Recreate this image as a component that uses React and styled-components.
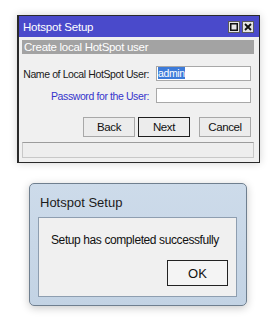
import React from 'react';
import styled, {createGlobalStyle} from 'styled-components';

const GlobalStyle = createGlobalStyle`
    body{
        margin: 0;
        background: #ffffff;
        font-family: "Liberation Sans", Arial, sans-serif;
    }
`;

const Page = styled('div')`
    width: 274px;
    height: 320px;
    display: flex;
    flex-direction: column;
    align-items: flex-start;
    overflow: hidden;
`;

const SetupWindow = styled('div')`
    margin: 15px 0 0 17px;
    width: 243px;
    height: 148px;
    box-sizing: border-box;
    border: 1px solid #2a2a2a;
    border-left-width: 2px;
    background: #f0f0f0;
    box-shadow: 0 0 8px rgba(0, 0, 0, 0.18);
    display: flex;
    flex-direction: column;
    font-size: 10.5px;
    letter-spacing: -0.4px;
    white-space: nowrap;
`;

const TitleBar = styled('div')`
    height: 21px;
    background: #4a4acb;
    display: flex;
    align-items: center;
    justify-content: space-between;
    padding: 0 5px 0 4px;
    color: #ffffff;
    font-size: 11.5px;
    letter-spacing: -0.2px;
`;

const TitleButtons = styled('div')`
    display: flex;
    gap: 2px;
`;

const TitleButton = styled('div')`
    width: 12px;
    height: 12px;
    box-sizing: border-box;
    background: #e4e4e4;
    border: 1px solid #5a5a5a;
    display: flex;
    align-items: center;
    justify-content: center;
`;

const Subtitle = styled('div')`
    margin: 3px 5px 0 3px;
    height: 14px;
    background: #a3a3a3;
    color: #ffffff;
    font-size: 11.5px;
    letter-spacing: -0.3px;
    line-height: 14px;
    padding-left: 2px;
`;

const Form = styled('div')`
    display: grid;
    grid-template-columns: minmax(0, 1fr) 95px;
    column-gap: 7px;
    row-gap: 7px;
    margin: 12px 8px 0 0;
    align-items: center;
`;

const Label = styled('div')`
    text-align: right;
    color: ${p => (p.$blue ? '#3535cc' : '#1a1a1a')};
`;

const Input = styled('div')`
    height: 15px;
    box-sizing: border-box;
    background: #ffffff;
    border: 1px solid #a8a8a8;
    line-height: 13px;
    padding-left: 1px;
`;

const Selected = styled('span')`
    background: #3d7bd9;
    color: #ffffff;
`;

const ButtonRow = styled('div')`
    display: flex;
    justify-content: flex-end;
    gap: 3px;
    margin: 14px 8px 0 0;
`;

const Button = styled('div')`
    width: 52px;
    height: 20px;
    box-sizing: border-box;
    border: 1px solid ${p => (p.$default ? '#1e1e1e' : '#a8a8a8')};
    background: #ececec;
    font-size: 11.5px;
    display: flex;
    align-items: center;
    justify-content: center;
    margin-left: ${p => p.$gap || 0}px;
    color: #111;
`;

const StatusBar = styled('div')`
    margin: 5px 5px 0 3px;
    height: 16px;
    box-sizing: border-box;
    border: 1px solid #c8c8c8;
    border-top-color: #9c9c9c;
    background: #eeeeee;
`;

const DoneWindow = styled('div')`
    margin: 20px 0 0 29px;
    width: 218px;
    height: 123px;
    box-sizing: border-box;
    border: 1px solid #6f7f8f;
    border-radius: 5px;
    background: linear-gradient(180deg, #cddbea 0%, #c3d3e4 100%);
    box-shadow: 0 2px 9px rgba(0, 0, 0, 0.22);
    padding: 0 9px 8px 8px;
    display: flex;
    flex-direction: column;
    white-space: nowrap;
`;

const DoneTitle = styled('div')`
    height: 33px;
    line-height: 37px;
    padding-left: 2px;
    font-size: 13px;
    color: #1b1b1b;
`;

const DonePanel = styled('div')`
    flex: 1;
    border: 1px solid #8e9eb0;
    background: #f0f0f0;
    display: flex;
    flex-direction: column;
    padding: 15px 8px 0 12px;
`;

const Message = styled('div')`
    font-size: 12px;
    letter-spacing: -0.4px;
    color: #111;
`;

const OkButton = styled('div')`
    align-self: flex-end;
    margin-top: 13px;
    width: 61px;
    height: 26px;
    box-sizing: border-box;
    border: 1px solid #222;
    background: #f4f4f4;
    font-size: 13px;
    display: flex;
    align-items: center;
    justify-content: center;
    color: #111;
`;

const App = () => {
    return(
        <Page>
            <GlobalStyle/>
            <SetupWindow>
                <TitleBar>
                    <span>Hotspot Setup</span>
                    <TitleButtons>
                        <TitleButton>
                            <svg width="8" height="8" viewBox="0 0 8 8">
                                <rect x="0.75" y="0.75" width="6.5" height="6.5" fill="none" stroke="#111" strokeWidth="1.5"/>
                            </svg>
                        </TitleButton>
                        <TitleButton>
                            <svg width="8" height="8" viewBox="0 0 8 8">
                                <path d="M1 1 L7 7 M7 1 L1 7" stroke="#111" strokeWidth="1.8"/>
                            </svg>
                        </TitleButton>
                    </TitleButtons>
                </TitleBar>
                <Subtitle>Create local HotSpot user</Subtitle>
                <Form>
                    <Label>Name of Local HotSpot User:</Label>
                    <Input><Selected>admin</Selected></Input>
                    <Label $blue>Password for the User:</Label>
                    <Input/>
                </Form>
                <ButtonRow>
                    <Button>Back</Button>
                    <Button $default>Next</Button>
                    <Button $gap={6}>Cancel</Button>
                </ButtonRow>
                <StatusBar/>
            </SetupWindow>
            <DoneWindow>
                <DoneTitle>Hotspot Setup</DoneTitle>
                <DonePanel>
                    <Message>Setup has completed successfully</Message>
                    <OkButton>OK</OkButton>
                </DonePanel>
            </DoneWindow>
        </Page>
    );
};

export default App;
